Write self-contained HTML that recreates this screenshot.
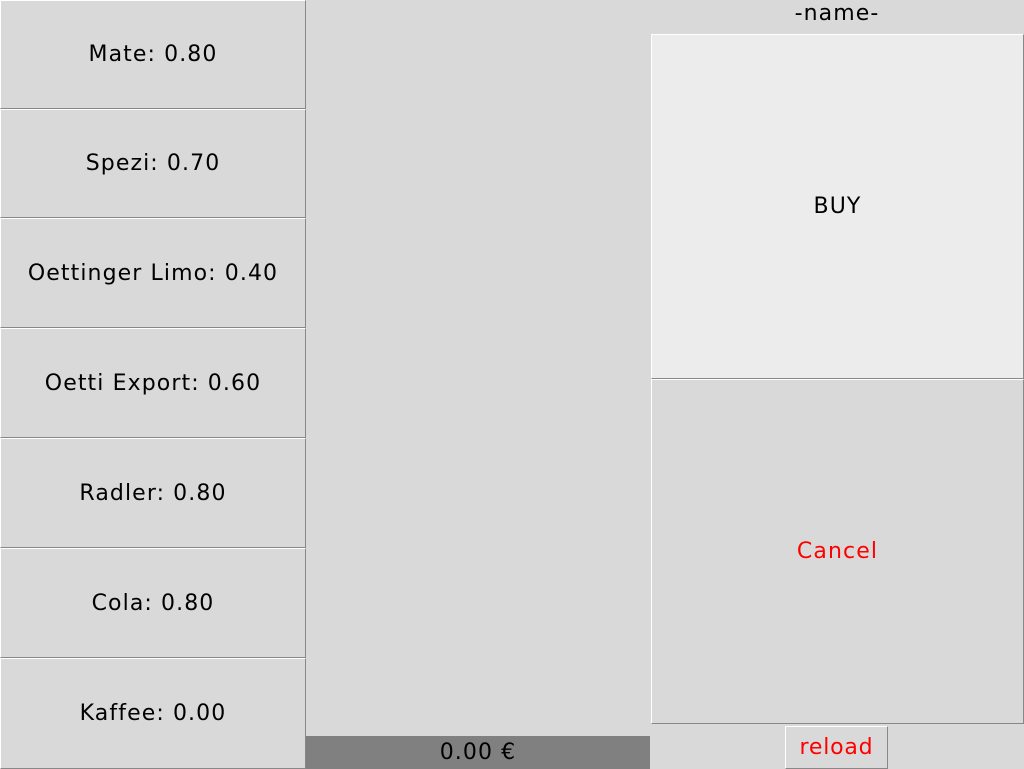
<!DOCTYPE html><html><head><style>
body{margin:0;width:1024px;height:769px;background:#d9d9d9;position:relative;overflow:hidden;font-family:"DejaVu Sans",sans-serif;font-size:22px}
.b{position:absolute;box-sizing:border-box;border-top:1px solid #fff;border-left:1px solid #fff;border-right:1px solid #888;border-bottom:1px solid #888;display:flex;align-items:center;justify-content:center;background:#d9d9d9;color:#000;letter-spacing:1.1px}
</style></head><body>
<div class="b" style="left:0;top:0;width:306px;height:109px">Mate: 0.80</div>
<div class="b" style="left:0;top:109px;width:306px;height:109px">Spezi: 0.70</div>
<div class="b" style="left:0;top:218px;width:306px;height:110px">Oettinger Limo: 0.40</div>
<div class="b" style="left:0;top:328px;width:306px;height:110px">Oetti Export: 0.60</div>
<div class="b" style="left:0;top:438px;width:306px;height:110px">Radler: 0.80</div>
<div class="b" style="left:0;top:548px;width:306px;height:110px">Cola: 0.80</div>
<div class="b" style="left:0;top:658px;width:306px;height:111px">Kaffee: 0.00</div>
<div style="position:absolute;left:306px;top:736px;width:344px;height:33px;background:#808080;display:flex;align-items:center;justify-content:center;letter-spacing:1.1px">0.00 €</div>
<div style="position:absolute;left:651px;top:1px;width:372px;text-align:center;letter-spacing:1.1px">-name-</div>
<div class="b" style="left:651px;top:34px;width:373px;height:345px;background:#ececec">BUY</div>
<div class="b" style="left:651px;top:379px;width:373px;height:345px;color:#f00">Cancel</div>
<div class="b" style="left:785px;top:726px;width:103px;height:43px;color:#f00;font-size:22px;letter-spacing:0.8px">reload</div>
</body></html>
